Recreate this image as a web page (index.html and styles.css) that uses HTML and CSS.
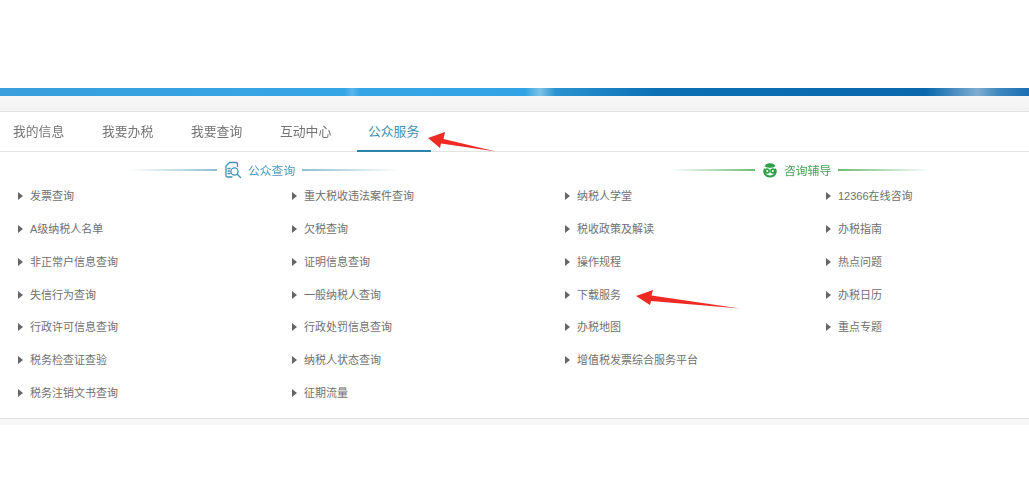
FILE: index.html
```html
<!DOCTYPE html>
<html lang="zh-CN">
<head>
<meta charset="utf-8">
<title>公众服务</title>
<link rel="stylesheet" href="styles.css">
</head>
<body>
<div class="top-space"></div>
<div class="banner"></div>
<div class="subbar"></div>
<nav class="tabs">
  <a class="tab">我的信息</a>
  <a class="tab">我要办税</a>
  <a class="tab">我要查询</a>
  <a class="tab">互动中心</a>
  <a class="tab active">公众服务</a>
</nav>
<main class="panel">
  <div class="headings">
    <div class="heading blue">
      <span class="rule rule-l"></span>
      <svg class="icon" width="18" height="18" viewBox="0 0 18 18" fill="none" stroke="#3f93b5" stroke-width="1.3" stroke-linecap="round" stroke-linejoin="round">
        <path d="M8 16H3.500C2.500 16 2 15.400 2 14.500V5L5.500 1.500H12C13 1.500 13.500 2 13.500 3V5.500"/>
        <path d="M4 7.500h2M4 10h1.500M4 12.500h2"/>
        <circle cx="10.500" cy="10.500" r="3.600"/>
        <path d="M13.200 13.200L16.500 16.500"/>
      </svg>
      <span class="label">公众查询</span>
      <span class="rule rule-r"></span>
    </div>
    <div class="heading green">
      <span class="rule rule-l"></span>
      <svg class="icon" width="16" height="16" viewBox="0 0 16 16" fill="none" stroke="#2f9e44" stroke-width="2" stroke-linecap="round">
        <path d="M3.500 4C4.500 1 11.500 1 12.500 4C11 5.500 5 5.500 3.500 4Z" fill="#2f9e44" stroke-width="1.200"/>
        <circle cx="5.200" cy="9" r="1.900" stroke-width="1.600"/>
        <circle cx="10.800" cy="9" r="1.900" stroke-width="1.600"/>
        <path d="M2.500 7.500C1.500 10 3 14.500 8 14.500C13 14.500 14.500 10 13.500 7.500"/>
      </svg>
      <span class="label">咨询辅导</span>
      <span class="rule rule-r"></span>
    </div>
  </div>
  <div class="links">
    <a class="link">发票查询</a><a class="link">重大税收违法案件查询</a><a class="link">纳税人学堂</a><a class="link">12366在线咨询</a>
    <a class="link">A级纳税人名单</a><a class="link">欠税查询</a><a class="link">税收政策及解读</a><a class="link">办税指南</a>
    <a class="link">非正常户信息查询</a><a class="link">证明信息查询</a><a class="link">操作规程</a><a class="link">热点问题</a>
    <a class="link">失信行为查询</a><a class="link">一般纳税人查询</a><a class="link">下载服务</a><a class="link">办税日历</a>
    <a class="link">行政许可信息查询</a><a class="link">行政处罚信息查询</a><a class="link">办税地图</a><a class="link">重点专题</a>
    <a class="link">税务检查证查验</a><a class="link">纳税人状态查询</a><a class="link">增值税发票综合服务平台</a><span></span>
    <a class="link">税务注销文书查询</a><a class="link">征期流量</a><span></span><span></span>
  </div>
</main>
<div class="footbar"></div>
<svg class="marks" width="1029" height="500" viewBox="0 0 1029 500">
  <path d="M428 138L445 132L443.500 139L496 151.500L441 143.500L440 148Z" fill="#ee2a24"/>
  <path d="M636 296L653 290L651.500 295.500L740 308.500L651 301L650 305Z" fill="#ee2a24"/>
</svg>
</body>
</html>
```

FILE: styles.css
```css
* { box-sizing: border-box; }
html, body { margin: 0; padding: 0; background: #fff; }
body {
  position: relative;
  width: 1029px;
  height: 500px;
  overflow: hidden;
  font-family: "Liberation Sans", "Noto Sans CJK SC", sans-serif;
  color: #666;
}
.top-space { height: 88px; }
.banner {
  height: 8px;
  background: linear-gradient(90deg, #3a9fdc 0, #35a5e6 33.500%, #5ab6ea 34.200%, #35a5e6 35%, #32a3e4 51%, #7cc3e6 52.500%, #2a93cf 54%, #0c70b5 64%, #0a68ad 90%, #7fadd0 95%, #3f88c0 97%, #1a6fb3 100%);
}
.subbar {
  height: 16px;
  background: linear-gradient(#f8f8f8, #f3f3f3);
  border-bottom: 1px solid #e2e2e2;
}
.tabs {
  display: flex;
  gap: 15px;
  padding-left: 2px;
  height: 40px;
  border-bottom: 1px solid #e3e3e3;
}
.tab {
  width: 74px;
  height: 40px;
  padding: 0 0 0 11px;
  font-size: 12.800px;
  line-height: 39px;
  color: #747474;
  white-space: nowrap;
  filter: blur(0.300px);
}
.tab.active {
  margin-left: -1px;
  color: #4592b4;
  border-bottom: 2px solid #2d83a8;
  filter: none;
}
.panel {
  height: 267px;
  border-bottom: 1px solid #e0e0e0;
}
.headings {
  display: grid;
  grid-template-columns: 547px 1fr;
  height: 28.250px;
  padding-top: 7px;
}
.heading {
  display: flex;
  align-items: center;
  font-size: 11.800px;
}
.heading:first-child { padding-left: 130px; }
.heading:last-child { padding-left: 123px; }
.heading .icon { margin: 0 6px 0 7px; flex: none; }
.heading .label { margin-right: 7px; white-space: nowrap; filter: blur(0.300px); }
.rule { height: 2px; display: block; flex: none; }
.blue .rule-l { width: 87px; background: linear-gradient(90deg, #fff, #8fbfd3); }
.blue .rule-r { width: 98px; background: linear-gradient(90deg, #8fbfd3, #fff); }
.green .rule-l { width: 85px; background: linear-gradient(90deg, #fff, #6dbb76); }
.green .rule-r { width: 93px; background: linear-gradient(90deg, #6dbb76, #fff); }
.blue .label { color: #4a9cc0; }
.green .label { color: #45a552; }
.links {
  display: grid;
  grid-template-columns: 274px 273px 261px 1fr;
  grid-auto-rows: 32.800px;
  padding: 0 0 0 18px;
}
.link {
  position: relative;
  padding-left: 12px;
  font-size: 11px;
  line-height: 32.800px;
  color: #707070;
  white-space: nowrap;
}
.link::before {
  content: "";
  position: absolute;
  left: 0;
  top: 12px;
  border-style: solid;
  border-width: 4px 0 4px 5px;
  border-color: transparent transparent transparent #666;
}
.footbar {
  height: 6px;
  background: #f6f6f6;
}
.marks {
  position: absolute;
  left: 0;
  top: 0;
  pointer-events: none;
}
```
